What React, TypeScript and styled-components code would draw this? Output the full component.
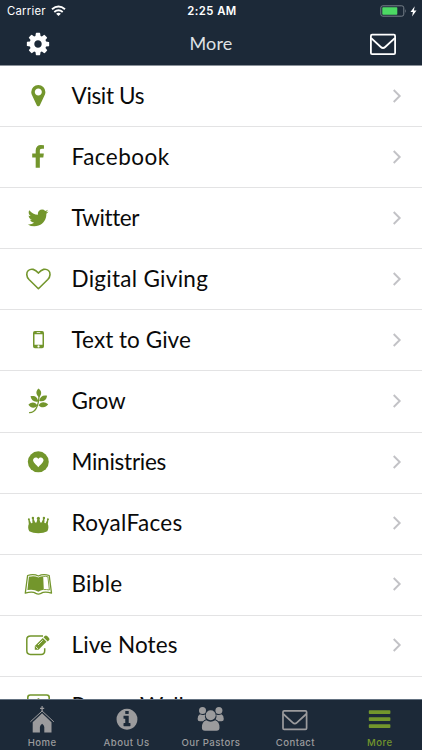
import React from 'react';
import styled, { createGlobalStyle } from 'styled-components';

const Global = createGlobalStyle`
  * { box-sizing: border-box; }
  body { margin: 0; background: #fff; font-family: Lato, "Open Sans", sans-serif; }
`;

const GREEN = '#73962c';
const NAVY = '#1c2938';
const GREY = '#9b9b9d';

const Screen = styled.div`
  display: flex;
  flex-direction: column;
  width: 422px;
  height: 750px;
  overflow: hidden;
  background: #fff;
`;

const Header = styled.header`
  flex: none;
  height: 66px;
  background: ${NAVY};
  border-bottom: 1px solid #8b929a;
  color: #fff;
`;

const StatusBar = styled.div`
  display: grid;
  grid-template-columns: 1fr auto 1fr;
  align-items: center;
  height: 22px;
  padding: 0 5px 0 7px;
  font: 400 11.3px/22px Inter, sans-serif;
  letter-spacing: 0.25px;
`;

const StatusSide = styled.div<{ $end?: boolean }>`
  display: flex;
  align-items: center;
  gap: ${p => (p.$end ? 3 : 5)}px;
  justify-content: ${p => (p.$end ? 'flex-end' : 'flex-start')};
`;

const Clock = styled.span`
  font-weight: 600;
  letter-spacing: 0.45px;
`;

const NavBar = styled.div`
  display: grid;
  grid-template-columns: 76px 1fr 76px;
  align-items: center;
  justify-items: center;
  height: 43px;
`;

const Title = styled.h1`
  margin: 0 0 2px;
  color: #dfe2e5;
  font: 400 18px/24px Lato, sans-serif;
  letter-spacing: 0.2px;
`;

const List = styled.ul`
  flex: 1;
  min-height: 0;
  margin: 0;
  padding: 0;
  overflow: hidden;
  list-style: none;
`;

const Row = styled.li`
  display: grid;
  grid-template-columns: 71.5px 1fr 50px;
  align-items: center;
  height: 61.1px;
  padding-bottom: 1px;
  border-bottom: 1px solid #e3e3e4;
`;

const IconCell = styled.div`
  display: flex;
  padding-left: 22px;
  color: ${GREEN};
`;

const Label = styled.span<{ $spacing: number }>`
  color: #0a0a0a;
  font-size: 22.5px;
  line-height: 28px;
  letter-spacing: ${p => p.$spacing}px;
  font-variant-ligatures: none;
  white-space: nowrap;
`;

const Chevron = styled.svg`
  margin-left: 19px;
`;

const TabBar = styled.nav`
  flex: none;
  display: grid;
  grid-template-columns: repeat(5, 1fr);
  height: 51px;
  background: ${NAVY};
  border-top: 1px solid #647281;
`;

const Tab = styled.div<{ $active?: boolean }>`
  display: flex;
  flex-direction: column;
  align-items: center;
  padding-top: 5px;
  color: ${p => (p.$active ? GREEN : GREY)};
`;

const TabLabel = styled.span`
  font: 500 9.6px/12px Inter, sans-serif;
  letter-spacing: 0.45px;
  white-space: nowrap;
`;

const EnvelopeIcon = styled.svg`
  margin: 2px 2px 0 0;
`;

const Envelope = ({ width = 28, height = 23 }: { width?: number; height?: number }) => (
  <EnvelopeIcon width={width} height={height} viewBox="0 0 28 23" fill="none" stroke="currentColor" strokeWidth="1.8" strokeLinejoin="round">
    <rect x="1.9" y="1.7" width="24.2" height="19.4" rx="1.2" />
    <path d="M2.200 5.200 11.800 14q2.200 2 4.400 0l9.600-8.800" />
  </EnvelopeIcon>
);

const Art = ({ children }: { children: React.ReactNode }) => (
  <svg width="32" height="32" viewBox="0 0 32 32" fill="currentColor">{children}</svg>
);

const Pin = () => (
  <Art>
    <path transform="translate(3.95 3.2) scale(.0138)" d="M1152 640q0-106-75-181t-181-75-181 75-75 181 75 181 181 75 181-75 75-181zm256 0q0 109-33 179l-364 774q-16 33-47.500 52t-67.500 19-67.500-19-46.500-52l-365-774q-33-70-33-179 0-212 150-362t362-150 362 150 150 362z" />
  </Art>
);

const Facebook = () => (
  <Art>
    <path transform="translate(3.700 4.100) scale(.0136)" d="M1343 12v264h-157q-86 0-116 36t-30 108v189h293l-39 296h-254v759h-306v-759h-255v-296h255v-218q0-186 104-288.500t277-102.500q147 0 228 12z" />
  </Art>
);

const Twitter = () => (
  <Art>
    <path transform="translate(4.400 4.200) scale(.0131)" d="M1684 408q-67 98-162 167 1 14 1 42 0 130-38 259.500t-115.500 248.500-184.500 210.500-258 146-323 54.500q-271 0-496-145 35 4 78 4 225 0 401-138-105-2-188-64.500t-114-159.500q33 5 61 5 43 0 85-11-112-23-185.500-111.500t-73.500-205.500v-4q68 38 146 41-66-44-105-115t-39-154q0-88 44-163 121 149 294.500 238.500t371.500 99.500q-8-38-8-74 0-134 94.500-228.500t228.500-94.500q140 0 236 102 109-21 205-78-37 115-142 178 93-10 186-50z" />
  </Art>
);

const Heart = () => (
  <Art>
    <path fill="none" stroke="currentColor" strokeWidth="1.600" strokeLinejoin="round" d="M16.400 25.700 7 16.500C4.200 13.600 4.100 9.400 6.300 7.500c2.900-2.400 6.800-1.500 10.100 2.600 3.300-4.100 7.200-5 10.100-2.600 2.200 1.900 2.100 6.100-.7 9z" />
  </Art>
);

const Phone = () => (
  <Art>
    <path fillRule="evenodd" d="M12.900 7h7.200a1.900 1.900 0 0 1 1.900 1.900v13.400a1.900 1.900 0 0 1-1.900 1.900h-7.200a1.900 1.900 0 0 1-1.900-1.900V8.900A1.900 1.900 0 0 1 12.900 7zm-.4 3.200v10.500h8V10.200zm2.200-1.900v.7h3.600v-.7zm1.800 13a1.100 1.100 0 1 0 .01 0z" />
  </Art>
);

const Leaf = () => (
  <Art>
    <path fill="none" stroke="currentColor" strokeWidth="1.300" strokeLinecap="round" d="M7.600 27.700c5.200-.4 8.800-5 9.400-16.500" />
    <path d="M16.500 3.600c3.400 2.300 3.600 6 .7 8.700-3.500-2.500-3.700-6-.7-8.700zM17.200 16c.6-4.200 3.700-6.300 7.900-5.300-.6 4.400-3.700 6.200-7.900 5.300zM16.200 16.400c-4.100.9-6.900-.9-7.700-5.200 4.200-1.100 7.300 1 7.700 5.200zM16.500 20.400c2.200-3.700 6-4.200 9.700-1.100-2.500 3.600-6.300 4-9.700 1.100zM15.500 20.700c-3 3-6.700 2.500-9.100-1 3.200-3.100 7-2.700 9.100 1z" />
  </Art>
);

const HeartDisc = () => (
  <Art>
    <circle cx="16.300" cy="15.800" r="10.500" />
    <path fill="#fff" d="M16.300 21.300c-1.200-2.100-4.600-4-5.200-6.500-.5-3.300 3.500-4.600 5.200-1.800 1.700-2.800 5.700-1.500 5.200 1.800-.6 2.500-4 4.400-5.200 6.500z" />
  </Art>
);

const Crown = () => (
  <Art>
    <path d="M6.300 12 7.200 12l1.900 4.200 1.300-.3-.1-5h1l1.900 4.700 1.300-.2 1-3.700h1.800l1 3.700 1.300.2 1.900-4.700h1l-.1 5 1.300.3 1.900-4.200h.9l-.7 5.100c1 2.100.8 5.300-.5 7.200-4.500 2.500-13.500 2.500-18 0-1.300-1.900-1.500-5.100-.5-7.200z" />
    <circle cx="6.900" cy="12.200" r="1" /><circle cx="10.900" cy="10.900" r="1.200" /><circle cx="16.400" cy="11.300" r="1.500" /><circle cx="21.900" cy="10.900" r="1.200" /><circle cx="25.900" cy="12.200" r="1" />
  </Art>
);

const Book = () => (
  <Art>
    <path fill="none" stroke="currentColor" strokeWidth="1.300" strokeLinejoin="round" d="M5.600 7.500q6-2 10.800.5 4.800-2.500 10.800-.5l2.300 17.700q-7-2.300-10.600.2-2.500 1.300-5 0-3.600-2.500-10.600-.2z" />
    <path d="M6.900 8.800q5.500-1.500 9.500.7 2-1.200 4.800-1.300l.6 13.500q-3.400.3-5.400 2-4.400-2.900-11-1.700z" />
    <path fill="none" stroke="currentColor" strokeWidth=".9" d="M21.200 8.400q2.400-.2 4.700.4l1.500 13.200q-3-.7-5.600-.4" />
  </Art>
);

const Note = () => (
  <Art>
    <path fill="none" stroke="currentColor" strokeWidth="1.500" d="M21 7H8.700C6.200 7 4.800 8.400 4.800 10.300v11.200c0 2.500 1.700 3.900 3.700 3.900h10.600c2.500 0 3.600-1.600 3.600-3.700v-2.500" />
    <path d="m12.800 17 8-8 3.700 3.700-8 8h-3.700zM21.500 8.200l1.200-1.200q1.200-1.200 2.400 0l1.900 1.900q1.100 1.200 0 2.300L25.700 12.400z" />
    <path stroke="#fff" strokeWidth=".8" fill="none" d="m16 16 4.700-4.700M13.600 17.500l2.400 2.400" />
  </Art>
);

const Prayer = () => (
  <Art>
    <rect fill="none" stroke="currentColor" strokeWidth="1.600" x="5.800" y="5" width="21.400" height="21" rx="2.500" />
    <path d="M15.600 8.300h1.700v14h-1.700zM11.500 12.500h9.900v1.700h-9.900z" />
  </Art>
);

const Gear = () => (
  <svg width="26" height="26" viewBox="0 0 1792 1792" fill="#fff">
    <path d="M1152 896q0-106-75-181t-181-75-181 75-75 181 75 181 181 75 181-75 75-181zm512-109v222q0 12-8 23t-20 13l-185 28q-19 54-39 91 35 50 107 138 10 12 10 25t-9 23q-27 37-99 108t-94 71q-12 0-26-9l-138-108q-44 23-91 38-16 136-29 186-7 28-36 28h-222q-14 0-24.500-8.500t-11.500-21.500l-28-184q-49-16-90-37l-141 107q-10 9-25 9-14 0-25-11-126-114-165-168-7-10-7-23 0-12 8-23 15-21 51-66.500t54-70.500q-27-50-41-99l-183-27q-13-2-21-12.500t-8-23.500v-222q0-12 8-23t19-13l186-28q14-46 39-92-40-57-107-138-10-12-10-24 0-10 9-23 26-36 98.500-107.500t94.500-71.500q13 0 26 10l138 107q44-23 91-38 16-136 29-186 7-28 36-28h222q14 0 24.500 8.500t11.500 21.500l28 184q49 16 90 37l142-107q9-9 24-9 13 0 25 10 129 119 165 170 7 8 7 22 0 12-8 23-15 21-51 66.500t-54 70.500q26 50 41 98l183 28q13 2 21 12.500t8 23.500z" />
  </svg>
);

const Church = () => (
  <Art>
    <path d="M15.500 1h1.200v1.800h1.500v1.200h-1.500v3h-1.200V4H14V2.800h1.500zM6.700 17.200l9.400-8.900 9.400 8.900v10.400h-7.200v-5.700q-.3-2-2.200-3.200-1.900 1.200-2.200 3.200v5.700H6.700z" />
    <path fill="none" stroke="currentColor" strokeWidth="1" d="M4.400 16.800 16.100 6l11.700 10.800" />
  </Art>
);

const Info = () => (
  <Art>
    <path transform="translate(3.800 2) scale(.0136)" d="M1152 1376v-160q0-14-9-23t-23-9h-96v-512q0-14-9-23t-23-9h-320q-14 0-23 9t-9 23v160q0 14 9 23t23 9h96v320h-96q-14 0-23 9t-9 23v160q0 14 9 23t23 9h448q14 0 23-9t9-23zm-128-896v-160q0-14-9-23t-23-9h-192q-14 0-23 9t-9 23v160q0 14 9 23t23 9h192q14 0 23-9t9-23zm640 416q0 209-103 385.500t-279.500 279.500-385.500 103-385.500-103-279.500-279.500-103-385.500 103-385.500 279.500-279.500 385.500-103 385.500 103 279.500 279.500 103 385.500z" />
  </Art>
);

const People = () => (
  <Art>
    <circle cx="7.500" cy="5.600" r="3.500" /><circle cx="23.900" cy="5.600" r="3.500" />
    <path d="M4.900 9.200q2.600 1.500 5.200.2-.8 3 .7 5.200-1.500.4-2.700 1.600H4.800q-2.200 0-2.200-2.200 0-3.500 2.300-4.800zM26.500 9.200q-2.600 1.500-5.200.2.800 3-.7 5.200 1.500.4 2.700 1.600h3.300q2.200 0 2.200-2.200 0-3.500-2.300-4.800z" />
    <circle cx="15.700" cy="10.300" r="5" />
    <path d="M11.200 15.300q4.500 2.800 9 0 4.300 1.200 4.300 7.300 0 3.200-3 3.200H9.900q-3 0-3-3.200 0-6.100 4.300-7.300z" />
  </Art>
);

const Mail = () => (
  <Art>
    <g fill="none" stroke="currentColor" strokeWidth="1.700" strokeLinejoin="round">
      <rect x="4" y="5.800" width="23.600" height="18.600" rx="1.200" />
      <path d="m4.300 9 9.400 8.600q2.100 1.900 4.200 0L27.300 9" />
    </g>
  </Art>
);

const Bars = () => (
  <Art><rect x="4.800" y="5.200" width="21.600" height="3.900" rx=".8" /><rect x="4.800" y="12.200" width="21.600" height="3.900" rx=".8" /><rect x="4.800" y="19.200" width="21.600" height="3.900" rx=".8" /></Art>
);

const items = [
  { label: 'Visit Us', Icon: Pin, spacing: -0.35 },
  { label: 'Facebook', Icon: Facebook, spacing: 0.5 },
  { label: 'Twitter', Icon: Twitter, spacing: -0.45 },
  { label: 'Digital Giving', Icon: Heart, spacing: 0.28 },
  { label: 'Text to Give', Icon: Phone, spacing: 0.05 },
  { label: 'Grow', Icon: Leaf, spacing: 0 },
  { label: 'Ministries', Icon: HeartDisc, spacing: -0.25 },
  { label: 'RoyalFaces', Icon: Crown, spacing: 0.32 },
  { label: 'Bible', Icon: Book, spacing: 0.3 },
  { label: 'Live Notes', Icon: Note, spacing: 0.12 },
  { label: 'Prayer Wall', Icon: Prayer, spacing: 0 },
];

const tabs = [
  { label: 'Home', Icon: Church },
  { label: 'About Us', Icon: Info },
  { label: 'Our Pastors', Icon: People },
  { label: 'Contact', Icon: Mail },
  { label: 'More', Icon: Bars, active: true },
];

export default function App() {
  return (
    <Screen>
      <Global />
      <Header>
        <StatusBar>
          <StatusSide>
            <span>Carrier</span>
            <svg width="15" height="12" viewBox="0 0 15 12" fill="none" stroke="#fff" strokeWidth="1.900">
              <path d="M1 4.300q6.500-5.500 13 0M3.300 6.900q4.200-3.500 8.400 0" />
              <path fill="#fff" stroke="none" d="M5.100 8.700q2.400-1.900 4.800 0L7.500 11z" />
            </svg>
          </StatusSide>
          <Clock>2:25 AM</Clock>
          <StatusSide $end>
            <svg width="27" height="12" viewBox="0 0 27 12">
              <rect x=".8" y=".8" width="23" height="10.400" rx="2" fill="none" stroke="#77808a" />
              <rect x="2.300" y="2.300" width="15" height="7.400" rx=".7" fill="#4cd964" />
              <path d="M25 4q1.500 2 0 4z" fill="#77808a" />
            </svg>
            <svg width="7" height="11" viewBox="0 0 7 11"><path fill="#fff" d="M4.700.3.500 6h2.400l-.8 4.600L6.500 4.500H3.900z" /></svg>
          </StatusSide>
        </StatusBar>
        <NavBar>
          <Gear />
          <Title>More</Title>
          <Envelope />
        </NavBar>
      </Header>
      <List>
        {items.map(({ label, Icon, spacing }) => (
          <Row key={label}>
            <IconCell><Icon /></IconCell>
            <Label $spacing={spacing}>{label}</Label>
            <Chevron width="12" height="16" viewBox="0 0 12 16" fill="none" stroke="#c2c2c6" strokeWidth="1.900"><path d="m2.700 2 6 6-6 6" /></Chevron>
          </Row>
        ))}
      </List>
      <TabBar>
        {tabs.map(({ label, Icon, active }) => (
          <Tab key={label} $active={active}>
            <Icon />
            <TabLabel>{label}</TabLabel>
          </Tab>
        ))}
      </TabBar>
    </Screen>
  );
}
